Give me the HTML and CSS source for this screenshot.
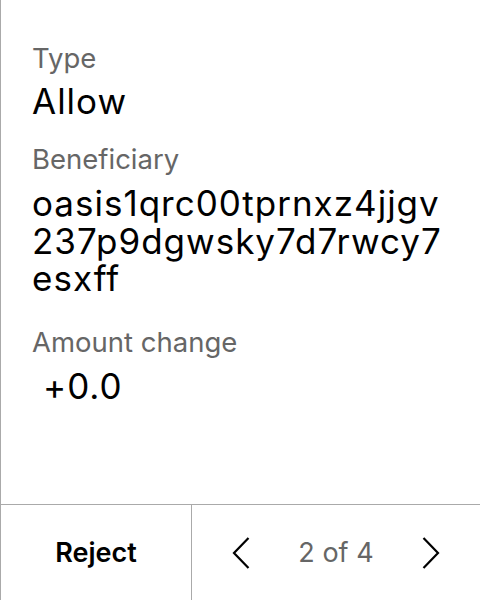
FILE: index.html
```html
<!DOCTYPE html>
<html lang="en">
<head>
<meta charset="utf-8">
<title>Allowance</title>
<link rel="stylesheet" href="styles.css">
</head>
<body>
<div class="screen">
  <main class="details">
    <section class="field field-type">
      <div class="label">Type</div>
      <div class="value">Allow</div>
    </section>
    <section class="field field-beneficiary">
      <div class="label">Beneficiary</div>
      <div class="value address">oasis1qrc00tprnxz4jjgv<br>237p9dgwsky7d7rwcy7<br>esxff</div>
    </section>
    <section class="field field-amount">
      <div class="label">Amount change</div>
      <div class="value amount">+0.0</div>
    </section>
  </main>
  <footer class="actions">
    <button class="reject">Reject</button>
    <nav class="pager">
      <span class="chev">
        <svg width="18" height="32" viewBox="0 0 18 32"><path d="M16.5 1 L2 16 L16.5 31" fill="none" stroke="#000" stroke-width="2.2"/></svg>
      </span>
      <span class="count">2 of 4</span>
      <span class="chev">
        <svg width="18" height="32" viewBox="0 0 18 32"><path d="M1.5 1 L16 16 L1.5 31" fill="none" stroke="#000" stroke-width="2.2"/></svg>
      </span>
    </nav>
  </footer>
</div>
</body>
</html>
```
FILE: styles.css
```css
html, body {
  margin: 0;
  padding: 0;
  background: #fff;
}
body {
  font-family: Inter, "Noto Sans", sans-serif;
  color: #000;
}
.screen {
  width: 480px;
  height: 600px;
  box-sizing: border-box;
  border-left: 1px solid #aaa;
  display: flex;
  flex-direction: column;
}
.details {
  flex: 1;
  padding: 42px 0 0 31px;
}
.label {
  font-size: 27.5px;
  line-height: 32px;
  color: #666;
}
.value {
  font-size: 35px;
  line-height: 38px;
  letter-spacing: 1px;
  margin-top: 8px;
}
.field-beneficiary {
  margin-top: 23px;
}
.address {
  line-height: 37.5px;
  margin-top: 10px;
}
.field-amount {
  margin-top: 28px;
}
.amount {
  margin-top: 9px;
  padding-left: 11px;
}
.actions {
  height: 96px;
  box-sizing: border-box;
  border-top: 1px solid #aaa;
  display: grid;
  grid-template-columns: 191px 1fr;
}
.reject {
  border: 0;
  border-right: 1px solid #aaa;
  background: #fff;
  font-family: Inter, "Noto Sans", sans-serif;
  font-size: 27px;
  font-weight: 600;
  color: #000;
  padding: 0;
}
.pager {
  display: flex;
  align-items: center;
  justify-content: center;
  gap: 48px;
}
.chev {
  display: flex;
}
.count {
  font-size: 27px;
  color: #666;
}
```
